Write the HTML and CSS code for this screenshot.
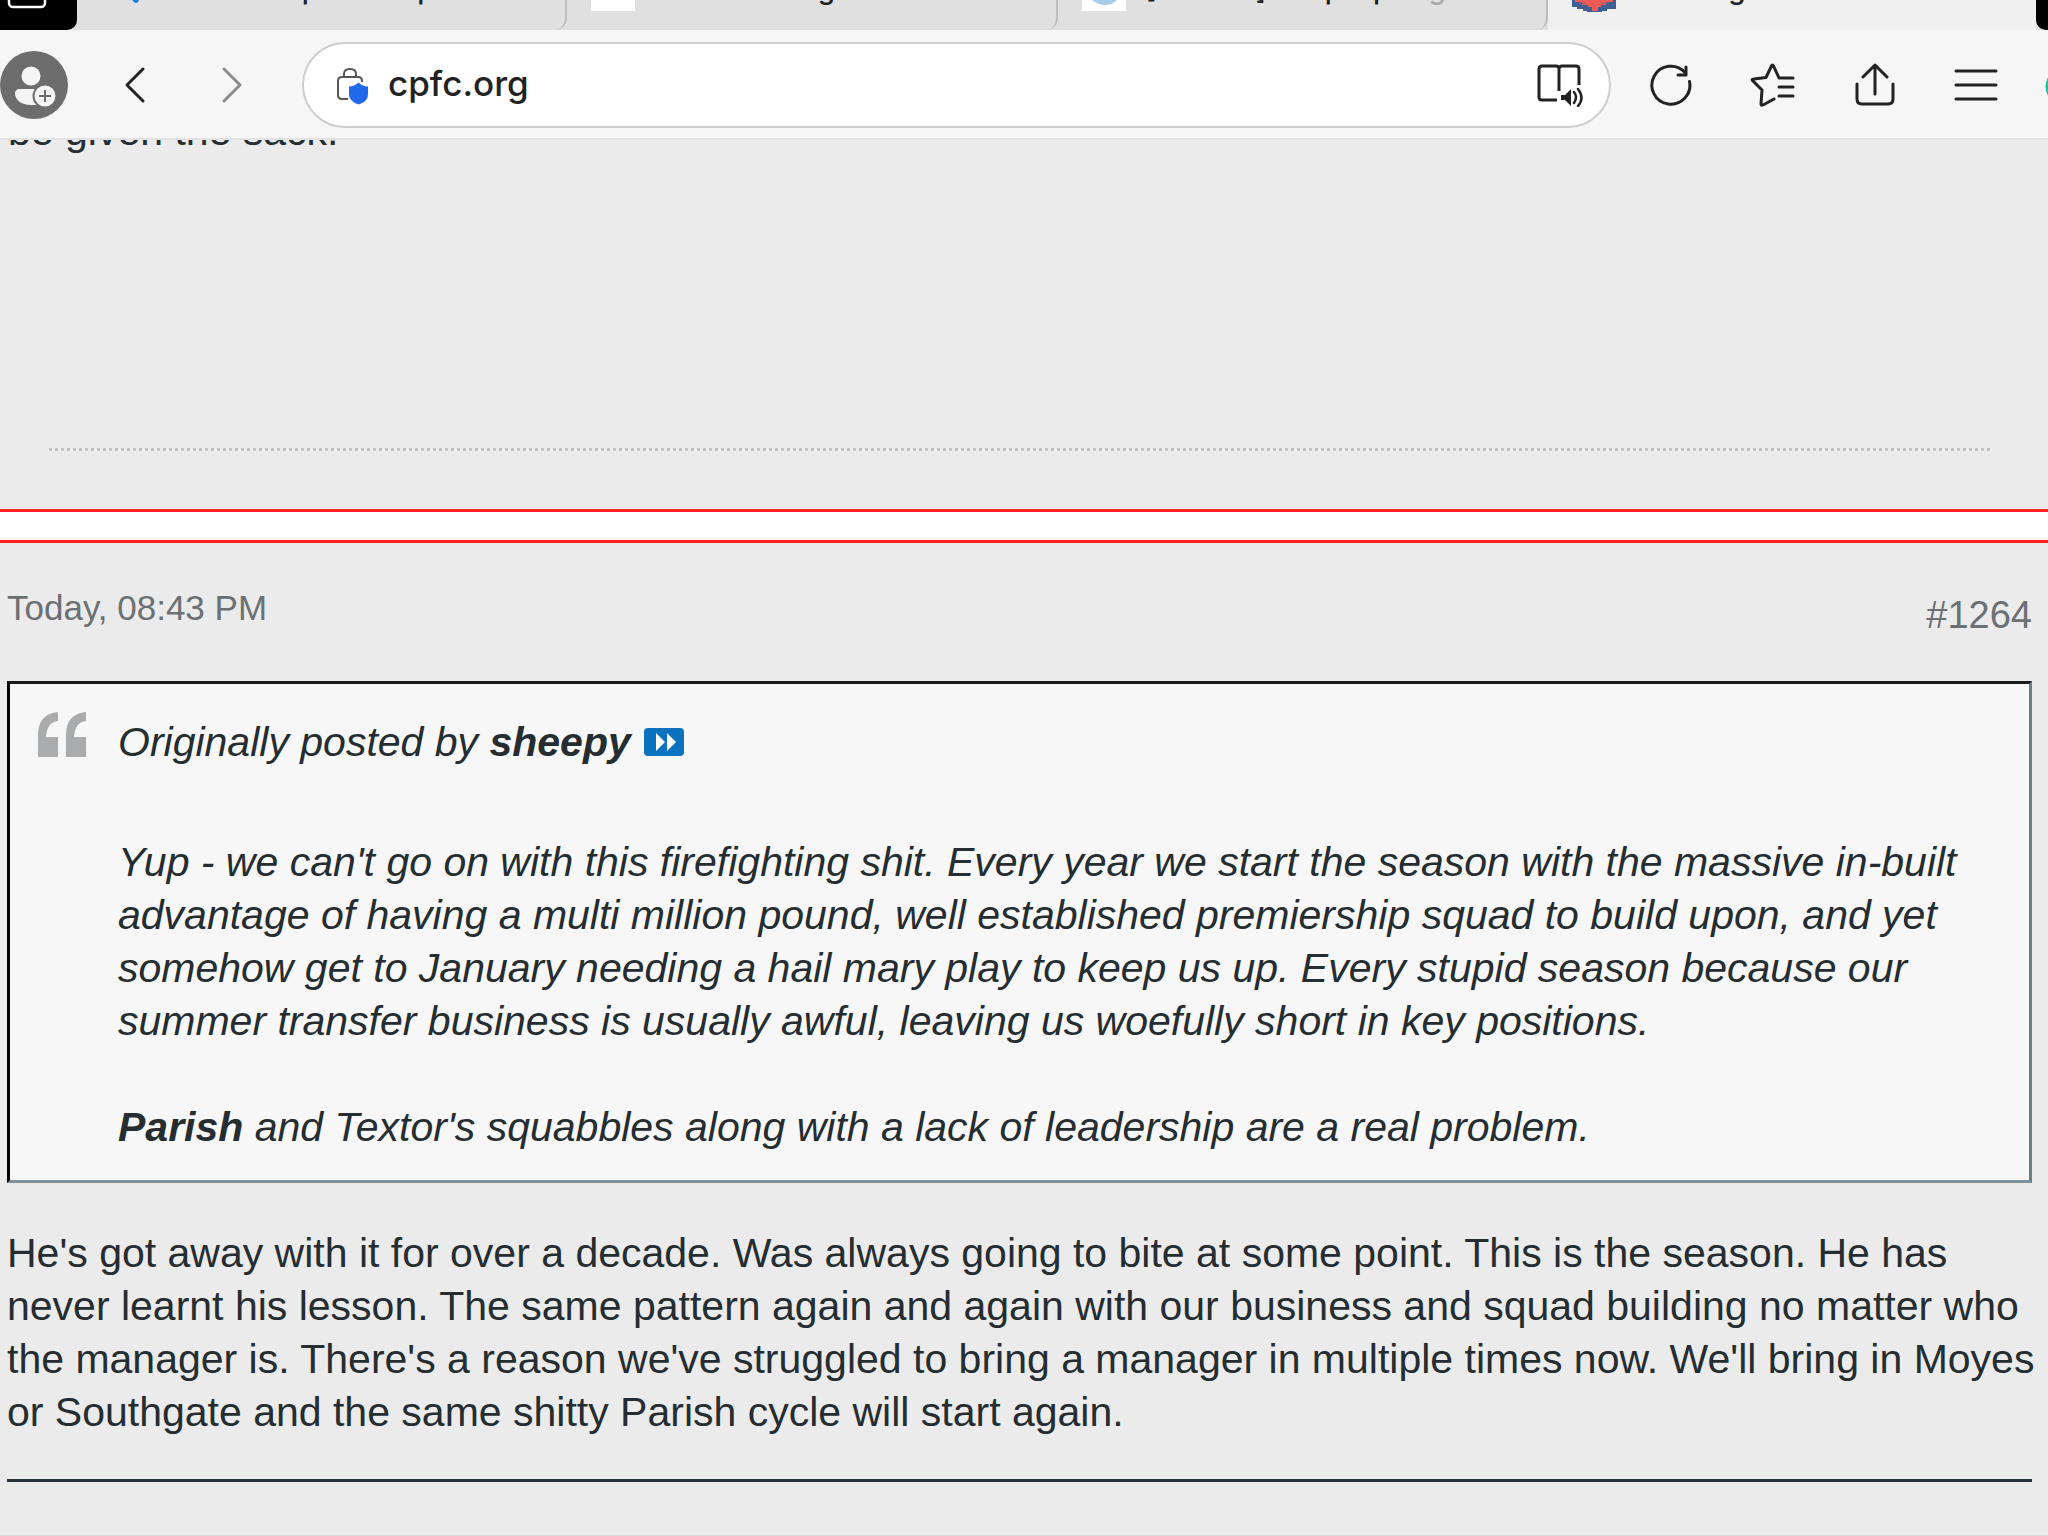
FILE: index.html
```html
<!DOCTYPE html>
<html lang="en">
<head>
<meta charset="utf-8">
<meta name="viewport" content="width=device-width, initial-scale=1">
<title>cpfc.org</title>
<link rel="stylesheet" href="styles.css">
</head>
<body>
<div class="window">
  <header class="chrome">
    <nav class="tabs" aria-label="Tabs">
      <button class="tab-overview" aria-label="Tab overview"><svg width="54" height="12" viewBox="0 0 54 12"><path d="M9-20V3a4 4 0 0 0 4 4h28a4 4 0 0 0 4-4V-20" fill="none" stroke="#fff" stroke-width="2.500"/></svg></button>
      <div class="tab-list">
        <a class="tab" href="#"><svg class="favicon" width="44" height="12" viewBox="0 0 44 12"><path d="M31 0h7l-1 2q-2 2-4 0z" fill="#1b7fd6"/></svg><span class="tab-title">Transfer updates up</span></a>
        <a class="tab" href="#"><svg class="favicon" width="44" height="12" viewBox="0 0 44 12"><path d="M0 0h44v11H0z" fill="#fff"/></svg><span class="tab-title">Newton Margate</span></a>
        <a class="tab" href="#"><svg class="favicon" width="44" height="12" viewBox="0 0 44 12"><path d="M0 0h44v11H0z" fill="#fff"/><path d="M10 0h25q-5 5-12 5T10 0z" fill="#a9cbea"/></svg><span class="tab-title">[Forums] People pilin<span class="fade">g</span></span></a>
        <a class="tab tab-active" href="#"><svg class="favicon" width="44" height="12" viewBox="0 0 44 12"><path d="M0 0h44v9h-9v2h-5v1H15v-1h-4V9H5V7H0z" fill="#3f6094"/><path d="M3 0h38v2h-7v3h-5v2h-3v4h-6V7h-4V5h-6V2H3z" fill="#ee5a54"/><path d="M6 3h8M30 3h8" stroke="#8f5a7c" stroke-width="1"/></svg><span class="tab-title">Running out of ideas</span></a>
      </div>
      <span class="tab-end"></span>
    </nav>
    <div class="toolbar">
      <button class="profile" aria-label="Profile"><svg width="69" height="68" viewBox="0 0 69 68"><circle cx="34" cy="34" r="34" fill="#6d6d6d"/><circle cx="31" cy="25" r="9.500" fill="#f5f5f5"/><path d="M19 38h22v16H31c-10 0-16-5-16-12 0-2 2-4 4-4z" fill="#f5f5f5"/><circle cx="45" cy="45" r="11.500" fill="#f5f5f5" stroke="#6d6d6d" stroke-width="2"/><path d="M39 45h12M45 39v12" stroke="#6d6d6d" stroke-width="2"/></svg></button>
      <button class="back" aria-label="Back"><svg width="24" height="40" viewBox="0 0 24 40"><path d="M20 4L4 20l16 16" fill="none" stroke="#222" stroke-width="3" stroke-linecap="round" stroke-linejoin="round"/></svg></button>
      <button class="forward" aria-label="Forward"><svg width="24" height="40" viewBox="0 0 24 40"><path d="M4 4l16 16L4 36" fill="none" stroke="#8b8b8b" stroke-width="3" stroke-linecap="round" stroke-linejoin="round"/></svg></button>
      <div class="address">
        <svg width="34" height="40" viewBox="0 0 34 40"><path d="M12 34H6q-4 0-4-4V16q0-4 4-4h16q4 0 4 4v1M8 12V9q0-5 6-5t6 5v3" fill="none" stroke="#555" stroke-width="2"/><path d="M22.500 17.500q4 4 9.500 4v8q0 7-9.500 10Q13 36 13 29.500v-8q5.500 0 9.500-4z" fill="#2169eb"/></svg>
        <input class="url" type="text" value="cpfc.org" aria-label="Address">
        <button aria-label="Read aloud"><svg width="48" height="44" viewBox="0 0 48 44"><path d="M22 28V6M20 37H5q-3 0-3-3V6q0-3 3-3h14q3 0 3 3 0-3 3-3h14q3 0 3 3v16" fill="none" stroke="#222" stroke-width="3"/><path d="M24 32h4l6-6v17l-6-6h-4z" fill="#222"/><path d="M37 29q4 5 0 11M41 26q7 9 0 17" fill="none" stroke="#222" stroke-width="2.500" stroke-linecap="round"/></svg></button>
      </div>
      <div class="actions">
        <button aria-label="Reload"><svg width="44" height="44" viewBox="0 0 44 44"><path d="M40.500 18.500A19 19 0 1 1 36 9.500" fill="none" stroke="#222" stroke-width="3" stroke-linecap="round"/><path d="M37 4v8h-8" fill="none" stroke="#222" stroke-width="3" stroke-linecap="round" stroke-linejoin="round"/></svg></button>
        <button aria-label="Favourites"><svg width="46" height="44" viewBox="0 0 46 44"><path d="M43 15H29L23.500 3Q22.500 1 21.500 3L16 14.500 4 16q-3 0-1 2l9 9-1 14q0 2 2 1l11-6M29 24h14M29 33h14" fill="none" stroke="#222" stroke-width="3" stroke-linecap="round" stroke-linejoin="round"/></svg></button>
        <button aria-label="Share"><svg width="44" height="44" viewBox="0 0 44 44"><path d="M4 21v15q0 5 5 5h26q5 0 5-5V21M22 31V2M10 14L22 2l12 12" fill="none" stroke="#222" stroke-width="3" stroke-linecap="round" stroke-linejoin="round"/></svg></button>
        <button aria-label="Menu"><svg width="44" height="44" viewBox="0 0 44 44"><path d="M2 8h40M2 22h40M2 36h40" stroke="#222" stroke-width="3" stroke-linecap="round"/></svg></button>
      </div>
      <svg class="assistant" width="3" height="28" viewBox="0 0 3 28"><path d="M3 6Q-2 16 3 25z" fill="#19c3a0"/></svg>
    </div>
  </header>
  <main class="thread">
    <article class="previous">
      <p class="post-text">be given the sack.</p>
      <hr class="signature-rule">
    </article>
    <div class="post-gap"></div>
    <article class="post">
      <div class="post-head"><time>Today, 08:43 PM</time><a class="number" href="#">#1264</a></div>
      <blockquote class="quote">
        <svg class="quote-mark" width="50" height="48" viewBox="0 0 50 48"><path d="M20 0v9q-11 1-12 16h12v20H0V23Q0 2 20 0zM48 0v9q-11 1-12 16h12v20H28V23Q28 2 48 0z" fill="#a9abac"/></svg>
        <div class="quote-body">
          <p class="attribution">Originally posted by <b>sheepy</b> <a class="jump" href="#" aria-label="View post"><svg width="40" height="28" viewBox="0 0 40 28"><rect width="40" height="28" rx="4" fill="#0b72bf"/><path d="M12 5l9 9-9 9zM23 5l9 9-9 9z" fill="#fff"/></svg></a></p>
          <p>Yup - we can't go on with this firefighting shit. Every year we start the season with the massive in-built<br>advantage of having a multi million pound, well established premiership squad to build upon, and yet<br>somehow get to January needing a hail mary play to keep us up. Every stupid season because our<br>summer transfer business is usually awful, leaving us woefully short in key positions.</p>
          <p><b>Parish</b> and Textor's squabbles along with a lack of leadership are a real problem.</p>
        </div>
      </blockquote>
      <p class="post-text">He's got away with it for over a decade. Was always going to bite at some point. This is the season. He has<br>never learnt his lesson. The same pattern again and again with our business and squad building no matter who<br>the manager is. There's a reason we've struggled to bring a manager in multiple times now. We'll bring in Moyes<br>or Southgate and the same shitty Parish cycle will start again.</p>
      <hr class="post-rule">
    </article>
  </main>
</div>
</body>
</html>
```
FILE: styles.css
```css
* { box-sizing: border-box; }
body {
  margin: 0;
  background: #ebebeb;
  color: #252d31;
  font-family: "Liberation Sans", Arial, sans-serif;
  font-size: 41px;
  line-height: 53px;
}
p, blockquote, hr { margin: 0; }
svg { display: block; flex: none; }
button { display: block; flex: none; margin: 0; padding: 0; border: 0; background: none; }
a { color: inherit; text-decoration: none; }
.window { min-height: 100vh; overflow: hidden; border-bottom: 1px solid #d9d9d9; }

.chrome { position: relative; background: #f6f6f6; border-bottom: 2px solid #e2e2e2; font-family: Inter, "Liberation Sans", sans-serif; }
.tabs { display: flex; height: 30px; background: #e0e0e0; }
.tab-overview { display: flex; align-items: flex-start; width: 77px; background: #000; border-bottom-right-radius: 10px; }
.tab-list { display: flex; flex: 1; min-width: 0; }
.tab { display: flex; flex: 1; align-items: flex-start; min-width: 0; padding-left: 24px; overflow: hidden; border-right: 2px solid #bdbdbd; border-bottom-right-radius: 12px; }
.tab-active { background: #f0f0f0; border-right: 0; border-radius: 0; }
.favicon { margin-right: 20px; }
.tab-title { margin-top: -29px; font-size: 28px; line-height: 36px; font-weight: 500; color: #222; white-space: nowrap; }
.fade { color: #aaa; }
.tab-end { width: 12px; background: #000; border-bottom-left-radius: 10px; }

.toolbar { display: flex; align-items: center; height: 108px; padding-top: 2px; }
.back { margin-left: 54px; }
.forward { margin-left: 73px; }
.address { display: flex; flex: 1; align-items: center; min-width: 0; height: 86px; margin-left: 58px; padding: 0 24px 0 32px; background: #fff; border: 2px solid #cecece; border-radius: 43px; }
.url { flex: 1; min-width: 0; padding: 0 0 4px; margin-left: 18px; border: 0; background: none; color: #222; font: 500 35px/50px Inter, "Liberation Sans", sans-serif; }
.actions { display: flex; gap: 57px; margin: 0 47px 0 38px; }

.previous { padding-bottom: 58px; }
.previous .post-text { height: 343px; margin-top: -35px; padding-left: 8px; }
.signature-rule { margin: 0 58px 0 49px; border: 0; border-top: 3px dotted #c0c3c4; }
.post-gap { height: 34px; background: #fff; border: solid #f22; border-width: 3px 0; }
.post { padding: 38px 16px 0 7px; }
.post-head { display: flex; justify-content: space-between; color: #6b7072; font-size: 35px; line-height: 53px; }
.number { padding-top: 8px; font-size: 38px; }
.quote { display: flex; margin: 39px 0 44px; padding: 28px 28px 26px; border: 3px solid; border-color: #1a1a1a #6b7f86 #7f9198 #000; background: #f7f7f7; }
.quote-mark { margin-right: 30px; }
.quote-body { flex: 1; min-width: 0; padding-top: 4px; font-style: italic; white-space: nowrap; }
.quote-body p + p { margin-top: 53px; }
.quote-body .attribution { padding-bottom: 14px; }
.jump { display: inline-block; margin-left: 2px; }
.post-text { white-space: nowrap; }
.post-rule { margin-top: 40px; border: 0; border-top: 3px solid #283236; }
```
